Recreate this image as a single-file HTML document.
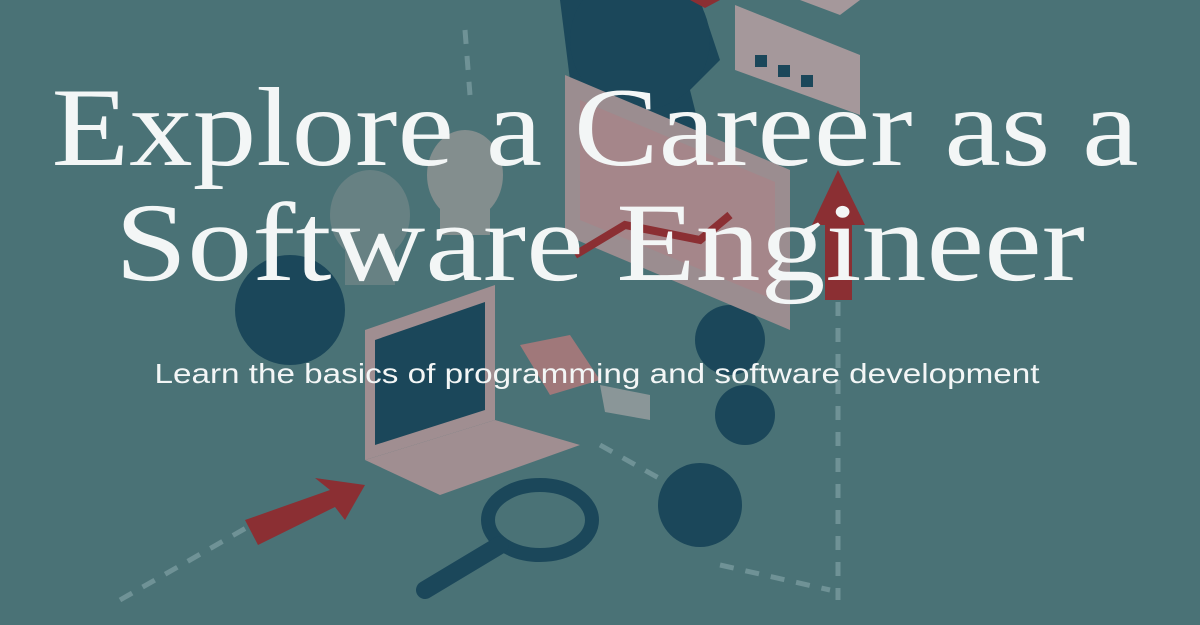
<!DOCTYPE html>
<html><head><meta charset="utf-8"><style>
html,body{margin:0;padding:0;width:1200px;height:625px;overflow:hidden;background:#4a7276}
svg{display:block}
</style></head><body>
<svg width="1200" height="625" viewBox="0 0 1200 625" xmlns="http://www.w3.org/2000/svg">
<rect width="1200" height="625" fill="#4a7276"/>
<!-- dashed lines -->
<g stroke="#6f9296" stroke-width="5" stroke-dasharray="14 12" fill="none">
<path d="M838 250 L838 600"/>
<path d="M120 600 L260 520"/>
<path d="M600 445 L680 490"/>
<path d="M720 565 L830 590"/>
<path d="M465 30 L470 95"/>
</g>
<!-- gears dark -->
<g fill="#1b475a">
<path d="M560 0 L700 0 L720 60 L690 90 L700 130 L650 150 L600 120 L570 80 Z"/>
<circle cx="640" cy="40" r="70"/>
<circle cx="290" cy="310" r="55"/>
<circle cx="745" cy="415" r="30"/>
<circle cx="700" cy="505" r="42"/>
<circle cx="730" cy="340" r="35"/>
</g>
<!-- bulbs -->
<g fill="#8d9393" opacity="0.85">
<ellipse cx="465" cy="175" rx="38" ry="45"/>
<rect x="440" y="205" width="50" height="30"/>
</g>
<g fill="#6f8587" opacity="0.8">
<ellipse cx="370" cy="215" rx="40" ry="45"/>
<rect x="345" y="245" width="50" height="40"/>
</g>
<!-- top card -->
<path d="M735 5 L860 55 L860 115 L735 70 Z" fill="#a5989b"/>
<rect x="755" y="55" width="12" height="12" fill="#1b475a"/>
<rect x="778" y="65" width="12" height="12" fill="#1b475a"/>
<rect x="801" y="75" width="12" height="12" fill="#1b475a"/>
<path d="M690 0 L720 0 L705 8 Z" fill="#8b2f33"/>
<path d="M800 0 L860 0 L840 15 Z" fill="#a5989b"/>
<!-- monitor -->
<path d="M565 75 L790 170 L790 330 L565 235 Z" fill="#9b8d90"/>
<path d="M580 100 L775 182 L775 300 L580 220 Z" fill="#a5868a"/>
<path d="M575 255 L625 225 L700 240 L730 215" stroke="#8b2f33" stroke-width="8" fill="none"/>
<!-- red up arrow -->
<path d="M838 170 L865 225 L852 225 L852 300 L825 300 L825 225 L812 225 Z" fill="#8b2f33"/>
<!-- laptop -->
<path d="M365 330 L495 285 L495 420 L365 460 Z" fill="#a08e91"/>
<path d="M375 340 L485 302 L485 410 L375 445 Z" fill="#1b475a"/>
<path d="M365 460 L495 420 L580 445 L440 495 Z" fill="#a08e91"/>
<!-- usb/red piece -->
<path d="M520 345 L570 335 L600 380 L550 395 Z" fill="#a0787a"/>
<path d="M600 385 L650 395 L650 420 L605 412 Z" fill="#8a9698"/>
<!-- red arrow -->
<path d="M245 520 L330 490 L315 478 L365 485 L345 520 L335 507 L258 545 Z" fill="#8b2f33"/>
<!-- magnifier -->
<ellipse cx="540" cy="520" rx="52" ry="35" fill="none" stroke="#1b475a" stroke-width="14"/>
<path d="M500 545 L425 590" stroke="#1b475a" stroke-width="18" stroke-linecap="round"/>
<text x="595" y="165" text-anchor="middle" textLength="1087" lengthAdjust="spacingAndGlyphs" font-family="'Liberation Serif',serif" font-size="112" fill="#f3f6f6">Explore a Career as a</text>
<text x="600" y="280" text-anchor="middle" textLength="970" lengthAdjust="spacingAndGlyphs" font-family="'Liberation Serif',serif" font-size="112" fill="#f3f6f6">Software Engineer</text>
<text x="597" y="383" text-anchor="middle" textLength="885" lengthAdjust="spacingAndGlyphs" font-family="'Liberation Sans',sans-serif" font-size="28" fill="#f3f6f6">Learn the basics of programming and software development</text>
</svg>
</body></html>
